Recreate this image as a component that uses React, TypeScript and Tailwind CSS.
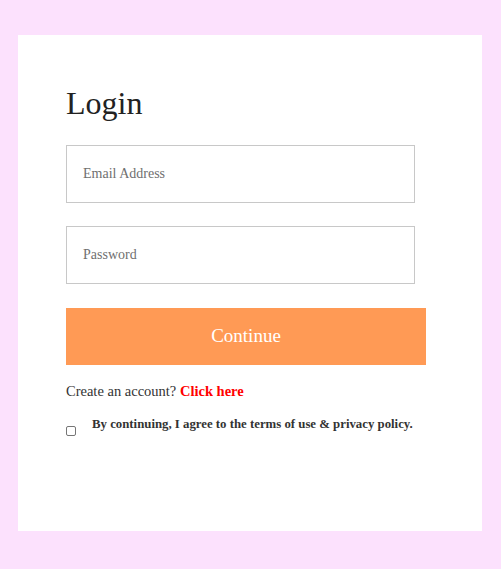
import React from "react";

export default function App() {
  const serif = { fontFamily: '"Liberation Serif", "Times New Roman", serif' };
  return (
    <div className="w-[501px] h-[569px] bg-[#fce1fd] pt-[35px] pl-[18px]" style={serif}>
      <div className="w-[464px] h-[496px] bg-white pl-[48px] pt-[50px]">
        <h1 className="text-[32px] leading-[37px] text-[#222] m-0">Login</h1>
        <div className="mt-[23px] w-[349px] h-[58px] border border-[#c8c8c8] flex items-center pl-[16px] pb-[1px] text-[14px] text-[#6f6f6f]">
          Email Address
        </div>
        <div className="mt-[23px] w-[349px] h-[58px] border border-[#c8c8c8] flex items-center pl-[16px] pb-[1px] text-[14px] text-[#6f6f6f]">
          Password
        </div>
        <div className="mt-[24px] w-[360px] h-[57px] bg-[#ff9a55] flex items-center justify-center text-white text-[19px]">
          Continue
        </div>
        <div className="mt-[17px] text-[14.5px] text-[#333] leading-[18px]">
          Create an account? <span className="font-bold text-[#ff0000]">Click here</span>
        </div>
        <div className="mt-[16px] flex items-start">
          <div className="mt-[10px] w-[10px] h-[10px] border border-[#767676] rounded-[2px] bg-white shrink-0"></div>
          <div className="ml-[16px] mt-[1px] text-[12.8px] font-bold text-[#333] leading-[15px]">
            By continuing, I agree to the terms of use &amp; privacy policy.
          </div>
        </div>
      </div>
    </div>
  );
}
